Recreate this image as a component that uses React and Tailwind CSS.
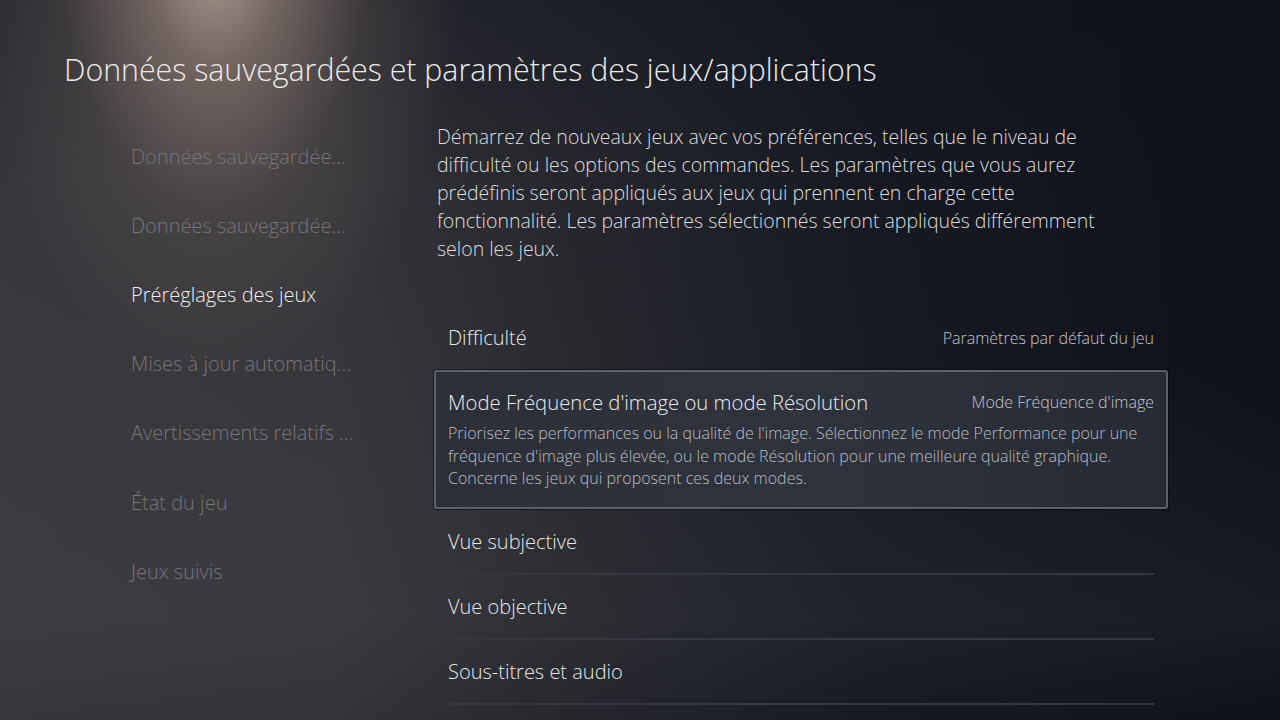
import React from 'react';

const sideItems = [
  { label: 'Données sauvegardée...', active: false },
  { label: 'Données sauvegardée...', active: false },
  { label: 'Préréglages des jeux', active: true },
  { label: 'Mises à jour automatiq...', active: false },
  { label: 'Avertissements relatifs ...', active: false },
  { label: 'État du jeu', active: false },
  { label: 'Jeux suivis', active: false },
];

const Row = ({ label, value, divider }) => (
  <div className="px-[14px]">
    <div className={`flex h-[65px] items-center justify-between ${divider ? 'border-b-2 border-[#34373e]' : ''}`}>
      <span className="text-[20px] text-[#e6e6e8]">{label}</span>
      {value && <span className="text-[16px] text-[#c4c5c9]">{value}</span>}
    </div>
  </div>
);

export default function App() {
  return (
    <div className="relative h-[720px] w-[1280px] overflow-hidden bg-[#0e111b] font-['Open_Sans','Noto_Sans',sans-serif] font-light">
      {/* backdrop: grey haze on the left + spotlight from the top */}
      <div className="absolute inset-0 bg-[linear-gradient(90deg,#3a3a3e_0%,#37373b_26%,#27282e_46%,#171a23_68%,#0e111b_100%)]" />
      <div className="absolute inset-0 bg-[linear-gradient(180deg,rgba(14,17,27,0.45)_0%,rgba(14,17,27,0.1)_25%,rgba(14,17,27,0)_50%,rgba(70,72,78,0.18)_86%,rgba(14,17,27,0.1)_100%)]" />
      <div className="absolute inset-0 bg-[radial-gradient(ellipse_250px_440px_at_215px_-60px,rgba(200,178,165,0.9)_0%,rgba(165,142,130,0.6)_28%,rgba(115,100,96,0.28)_62%,rgba(60,60,64,0)_100%)]" />

      <div className="relative flex h-full flex-col">
        <h1 className="pl-[64px] pt-[50px] text-[30.3px] font-light leading-[40px] text-[#ecebec]">
          Données sauvegardées et paramètres des jeux/applications
        </h1>

        <div className="mt-[33px] flex">
          {/* sidebar */}
          <nav className="-mt-[1px] flex w-[434px] shrink-0 flex-col pl-[131px]">
            {sideItems.map((item, i) => (
              <div key={i} className="flex h-[69.2px] items-center">
                <span className={`whitespace-nowrap text-[20px] ${item.active ? 'text-[#efeff0]' : 'text-[#77757a]'}`}>
                  {item.label}
                </span>
              </div>
            ))}
          </nav>

          {/* content */}
          <div className="w-[734px]">
            <p className="ml-[3px] text-[19.5px] leading-[28px] text-[#dcdcde]">
              Démarrez de nouveaux jeux avec vos préférences, telles que le niveau de
              <br />
              difficulté ou les options des commandes. Les paramètres que vous aurez
              <br />
              prédéfinis seront appliqués aux jeux qui prennent en charge cette
              <br />
              fonctionnalité. Les paramètres sélectionnés seront appliqués différemment
              <br />
              selon les jeux.
            </p>

            <div className="mt-[42px] flex flex-col">
              <Row label="Difficulté" value="Paramètres par défaut du jeu" />

              <div className="h-[139px] rounded-[3px] border-2 border-[#5b606c] bg-[linear-gradient(90deg,#2c2f37_0%,#2f333d_50%,#262a34_100%)] px-[12px] pt-[15px] shadow-[0_0_0_1px_rgba(0,0,0,0.5)]">
                <div className="flex items-center justify-between">
                  <span className="text-[20.3px] text-[#eaeaec]">Mode Fréquence d'image ou mode Résolution</span>
                  <span className="text-[16px] text-[#c4c5c9]">Mode Fréquence d'image</span>
                </div>
                <p className="mt-[5px] text-[16px] leading-[22.5px] text-[#b9bcc3]">
                  Priorisez les performances ou la qualité de l'image. Sélectionnez le mode Performance pour une
                  <br />
                  fréquence d'image plus élevée, ou le mode Résolution pour une meilleure qualité graphique.
                  <br />
                  Concerne les jeux qui proposent ces deux modes.
                </p>
              </div>

              <div className="h-[1px]" />
              <Row label="Vue subjective" divider />
              <Row label="Vue objective" divider />
              <Row label="Sous-titres et audio" divider />
            </div>
          </div>
        </div>
      </div>
    </div>
  );
}
